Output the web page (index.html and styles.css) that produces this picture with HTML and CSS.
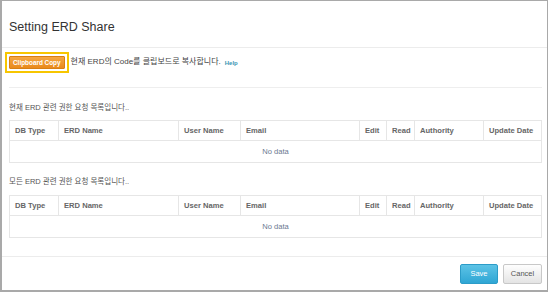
FILE: index.html
```html
<!DOCTYPE html>
<html lang="ko">
<head>
  <meta charset="UTF-8">
  <title>Setting ERD Share</title>
  <link rel="stylesheet" href="styles.css">
</head>
<body>
  <div class="modal">
    <div class="modal-header">
      <h4>Setting ERD Share</h4>
    </div>

    <div class="modal-body">
      <div class="copy-row">
        <span class="copy-focus"><button class="btn-copy">Clipboard Copy</button></span>
        <span class="copy-text">현재 ERD의 Code를 클립보드로 복사합니다.</span>
        <a class="help" href="#">Help</a>
      </div>

      <hr>

      <p class="list-title">현재 ERD 관련 권한 요청 목록입니다..</p>
      <table class="share-table">
        <thead>
          <tr>
            <th class="c-db">DB Type</th>
            <th class="c-erd">ERD Name</th>
            <th class="c-user">User Name</th>
            <th class="c-email">Email</th>
            <th class="c-edit">Edit</th>
            <th class="c-read">Read</th>
            <th class="c-auth">Authority</th>
            <th class="c-date">Update Date</th>
          </tr>
        </thead>
        <tbody>
          <tr>
            <td colspan="8" class="empty">No data</td>
          </tr>
        </tbody>
      </table>

      <p class="list-title second">모든 ERD 관련 권한 요청 목록입니다..</p>
      <table class="share-table">
        <thead>
          <tr>
            <th class="c-db">DB Type</th>
            <th class="c-erd">ERD Name</th>
            <th class="c-user">User Name</th>
            <th class="c-email">Email</th>
            <th class="c-edit">Edit</th>
            <th class="c-read">Read</th>
            <th class="c-auth">Authority</th>
            <th class="c-date">Update Date</th>
          </tr>
        </thead>
        <tbody>
          <tr>
            <td colspan="8" class="empty">No data</td>
          </tr>
        </tbody>
      </table>
    </div>

    <div class="modal-footer">
      <button class="btn btn-save">Save</button>
      <button class="btn btn-cancel">Cancel</button>
    </div>
  </div>
</body>
</html>
```

FILE: styles.css
```css
body {
  margin: 0;
  background-color: #fff;
  font-family: "Liberation Sans", Arial, "Noto Sans CJK KR", sans-serif;
  color: #555;
}
.modal {
  width: 548px;
  height: 292px;
  box-sizing: border-box;
  border: 1px solid #a9a9a9;
  border-left-width: 2px;
  border-bottom-width: 2px;
  background-color: #fff;
  display: flex;
  flex-direction: column;
}
.modal-header {
  height: 47px;
  box-sizing: border-box;
  border-bottom: 1px solid #ececec;
  padding: 6px 7px 0;
  display: flex;
  align-items: center;
}
.modal-header h4 {
  margin: 0;
  font-size: 12.5px;
  font-weight: normal;
  color: #333;
}
.modal-body {
  flex: 1;
  padding: 3px 5px 0 7px;
}
.copy-row {
  display: flex;
  align-items: center;
  height: 22px;
}
.copy-focus {
  display: inline-flex;
  padding: 2px;
  border: 2px solid #f7c600;
  margin-left: -4px;
}
.btn-copy {
  height: 13px;
  padding: 0 3px;
  border: 1px solid #d97f12;
  border-radius: 1px;
  background: linear-gradient(#f5a640, #e98a1c);
  color: #fff;
  font-family: "Liberation Sans", Arial, sans-serif;
  font-size: 6.4px;
  font-weight: bold;
  line-height: 11px;
}
.copy-text {
  margin-left: 2px;
  font-family: "Liberation Sans", "Noto Sans CJK KR", sans-serif;
  font-size: 8px;
  line-height: 10px;
  color: #444;
}
.help {
  margin-left: 4px;
  padding-top: 2px;
  font-size: 6px;
  line-height: 10px;
  font-weight: bold;
  color: #3b97b3;
  text-decoration: none;
}
hr {
  border: none;
  border-top: 1px solid #eee;
  margin: 14px 0 0;
}
.list-title {
  margin: 13px 0 0;
  height: 19px;
  font-family: "Liberation Sans", "Noto Sans CJK KR", sans-serif;
  font-size: 7.5px;
  color: #555;
}
.list-title.second {
  margin-top: 12px;
  height: 20px;
}
.share-table {
  width: 532px;
  border-collapse: collapse;
  table-layout: fixed;
}
.share-table th, .share-table td {
  box-sizing: border-box;
  border: 1px solid #e6e6e6;
  padding: 0 5px;
  text-align: left;
  white-space: nowrap;
  overflow: hidden;
}
.share-table th {
  height: 20px;
  font-size: 7.6px;
  font-weight: bold;
  color: #666;
}
.share-table td.empty {
  height: 22px;
  text-align: center;
  font-size: 7.6px;
  color: #6b7890;
}
.c-db { width: 49px; }
.c-erd { width: 120px; }
.c-user { width: 62px; }
.c-email { width: 119px; }
.c-edit { width: 27px; }
.c-read { width: 28px; }
.c-auth { width: 69px; }
.c-date { width: 58px; }
.modal-footer {
  height: 33px;
  border-top: 1px solid #ececec;
  padding: 0 5px 0 0;
  display: flex;
  justify-content: flex-end;
  align-items: center;
  gap: 5px;
}
.btn {
  height: 20px;
  width: 38px;
  padding: 0;
  border-radius: 2px;
  font-family: "Liberation Sans", Arial, sans-serif;
  font-size: 7.5px;
}
.btn-save {
  border: 1px solid #2c9cc8;
  background: linear-gradient(#5cc3e6, #2fa6d4);
  color: #fff;
}
.btn-cancel {
  width: 39px;
  border: 1px solid #c8c8c8;
  background: linear-gradient(#fefefe, #e4e4e4);
  color: #555;
}
```
